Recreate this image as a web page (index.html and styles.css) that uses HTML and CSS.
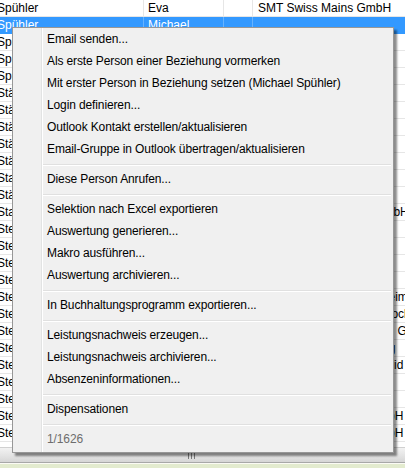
FILE: index.html
```html
<!DOCTYPE html>
<html>
<head>
<meta charset="utf-8">
<link rel="stylesheet" href="styles.css">
</head>
<body>
<div class="screen">
  <div class="grid">
    <div class="row"><div class="c c1">Spühler</div><div class="c c2">Eva</div><div class="c c3"></div><div class="c c4">SMT Swiss Mains GmbH</div></div>
    <div class="row sel"><div class="c c1">Spühler</div><div class="c c2">Michael</div><div class="c c3"></div><div class="c c4"></div></div>
    <div class="row"><div class="c c1">Spühler</div><div class="c c2"></div><div class="c c3"></div><div class="c c4"></div></div>
    <div class="row"><div class="c c1">Spühler</div><div class="c c2"></div><div class="c c3"></div><div class="c c4"></div></div>
    <div class="row"><div class="c c1">Spühler</div><div class="c c2"></div><div class="c c3"></div><div class="c c4"></div></div>
    <div class="row"><div class="c c1">Stähli</div><div class="c c2"></div><div class="c c3"></div><div class="c c4"></div></div>
    <div class="row"><div class="c c1">Stähli</div><div class="c c2"></div><div class="c c3"></div><div class="c c4"></div></div>
    <div class="row"><div class="c c1">Stämpfli</div><div class="c c2"></div><div class="c c3"></div><div class="c c4"></div></div>
    <div class="row"><div class="c c1">Stämpfli</div><div class="c c2"></div><div class="c c3"></div><div class="c c4"></div></div>
    <div class="row"><div class="c c1">Stäubli</div><div class="c c2"></div><div class="c c3"></div><div class="c c4"></div></div>
    <div class="row"><div class="c c1">Stalder</div><div class="c c2"></div><div class="c c3"></div><div class="c c4"></div></div>
    <div class="row"><div class="c c1">Stäger</div><div class="c c2"></div><div class="c c3"></div><div class="c c4"></div></div>
    <div class="row"><div class="c c1">Stalder</div><div class="c c2"></div><div class="c c3"></div><div class="c c4">Stämpfli Haustechnik GmbH</div></div>
    <div class="row"><div class="c c1">Stettler</div><div class="c c2"></div><div class="c c3"></div><div class="c c4"></div></div>
    <div class="row"><div class="c c1">Steiner</div><div class="c c2"></div><div class="c c3"></div><div class="c c4"></div></div>
    <div class="row"><div class="c c1">Steiner</div><div class="c c2"></div><div class="c c3"></div><div class="c c4"></div></div>
    <div class="row"><div class="c c1">Steiner</div><div class="c c2"></div><div class="c c3"></div><div class="c c4"></div></div>
    <div class="row"><div class="c c1">Steiner</div><div class="c c2"></div><div class="c c3"></div><div class="c c4">APH Wohn- und Pflegeheim</div></div>
    <div class="row"><div class="c c1">Steiner</div><div class="c c2"></div><div class="c c3"></div><div class="c c4">Kantonsspital Luzern - Biochemie</div></div>
    <div class="row"><div class="c c1">Steiner</div><div class="c c2"></div><div class="c c3"></div><div class="c c4">Stettler Haustechnik Bern GmbH</div></div>
    <div class="row"><div class="c c1">Steiner</div><div class="c c2"></div><div class="c c3"></div><div class="c c4">Gemeindeverwaltung Zug</div></div>
    <div class="row"><div class="c c1">Steiner</div><div class="c c2"></div><div class="c c3"></div><div class="c c4">Schreinerei Roland Schmid</div></div>
    <div class="row"><div class="c c1">Steiner</div><div class="c c2"></div><div class="c c3"></div><div class="c c4"></div></div>
    <div class="row"><div class="c c1">Steiner</div><div class="c c2"></div><div class="c c3"></div><div class="c c4"></div></div>
    <div class="row"><div class="c c1">Stettler</div><div class="c c2"></div><div class="c c3"></div><div class="c c4">Steiner Haustechnik GmbH</div></div>
    <div class="row"><div class="c c1">Stettler</div><div class="c c2"></div><div class="c c3"></div><div class="c c4">Steiner Haustechnik GmbH</div></div>
  </div>
  <div class="hscroll"><div class="thumb"><span class="grip"></span></div></div>
  <div class="status"></div>

  <div class="menu">
    <div class="item">Email senden...</div>
    <div class="item">Als erste Person einer Beziehung vormerken</div>
    <div class="item">Mit erster Person in Beziehung setzen (Michael Spühler)</div>
    <div class="item">Login definieren...</div>
    <div class="item">Outlook Kontakt erstellen/aktualisieren</div>
    <div class="item">Email-Gruppe in Outlook übertragen/aktualisieren</div>
    <div class="sep"></div>
    <div class="item">Diese Person Anrufen...</div>
    <div class="sep"></div>
    <div class="item">Selektion nach Excel exportieren</div>
    <div class="item">Auswertung generieren...</div>
    <div class="item">Makro ausführen...</div>
    <div class="item">Auswertung archivieren...</div>
    <div class="sep"></div>
    <div class="item">In Buchhaltungsprogramm exportieren...</div>
    <div class="sep"></div>
    <div class="item">Leistungsnachweis erzeugen...</div>
    <div class="item">Leistungsnachweis archivieren...</div>
    <div class="item">Absenzeninformationen...</div>
    <div class="sep"></div>
    <div class="item">Dispensationen</div>
    <div class="sep"></div>
    <div class="item disabled">1/1626</div>
  </div>
</div>
</body>
</html>
```

FILE: styles.css
```css
* { box-sizing: border-box; }
html, body { margin: 0; padding: 0; }
body {
  width: 405px;
  height: 468px;
  overflow: hidden;
  background: #fff;
  font-family: "Liberation Sans", Arial, sans-serif;
  font-size: 12px;
  color: #000;
}
.screen {
  position: relative;
  width: 405px;
  height: 468px;
  overflow: hidden;
  display: flex;
  flex-direction: column;
}
.grid {
  height: 447px;
  flex: none;
  background: #fff;
}
.row {
  display: flex;
  height: 17px;
  border-bottom: 1px solid #e6e6e6;
  line-height: 16px;
  white-space: nowrap;
}
.c {
  overflow: hidden;
  border-right: 1px solid #e6e6e6;
  flex: none;
}
.c1 { width: 144px; text-indent: -3px; }
.c2 { width: 80px; padding-left: 4px; }
.c3 { width: 29px; }
.c4 { flex: 1; padding-left: 5px; border-right: none; overflow: visible; }
.row.sel {
  background: #3399ff;
  color: #fff;
  border-bottom-color: #3399ff;
}
.row.sel .c { border-right-color: #66b3ff; }
.hscroll {
  height: 16px;
  flex: none;
  background: linear-gradient(#f2f2f2, #e2e2e2 60%, #d6d6d6);
  border-top: 1px solid #d0d0d0;
  border-bottom: 1px solid #a8a8a8;
  display: flex;
}
.thumb {
  width: 382px;
  display: flex;
  align-items: center;
  justify-content: center;
}
.grip {
  width: 7px;
  height: 6px;
  border-left: 1px solid #7a7a7a;
  border-right: 1px solid #7a7a7a;
  position: relative;
  margin-top: 2px;
}
.grip::after {
  content: "";
  position: absolute;
  left: 2px;
  top: 0;
  width: 1px;
  height: 6px;
  background: #7a7a7a;
}
.status {
  flex: 1;
  background: #e3ebcf;
  border-top: 1px solid #fbfbf5;
}
.menu {
  position: absolute;
  left: 12px;
  top: 27px;
  width: 382px;
  height: 426px;
  background: #f0f0f0;
  border: 1px solid #979797;
  box-shadow: 3px 3px 2px rgba(0, 0, 0, 0.45);
  padding: 1px 0;
  letter-spacing: -0.12px;
}
.menu::before {
  content: "";
  position: absolute;
  left: 28px;
  top: 0;
  bottom: 0;
  width: 1px;
  background: #e2e3e3;
  box-shadow: 1px 0 0 #ffffff;
}
.item {
  height: 22px;
  line-height: 21px;
  padding-left: 34px;
  color: #000;
  white-space: nowrap;
  position: relative;
}
.item.disabled { color: #6d6d6d; }
.sep {
  height: 8px;
  margin-left: 30px;
  margin-right: 2px;
  position: relative;
}
.sep::after {
  content: "";
  position: absolute;
  left: 0;
  right: 0;
  top: 3px;
  height: 1px;
  background: #e0e0e0;
  box-shadow: 0 1px 0 #ffffff;
}
```
